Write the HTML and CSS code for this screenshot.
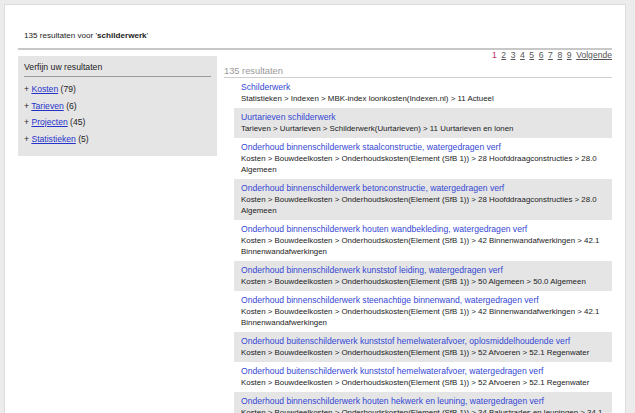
FILE: index.html
```html
<!DOCTYPE html>
<html lang="nl">
<head>
<meta charset="utf-8">
<title>Zoekresultaten</title>
<link rel="stylesheet" href="styles.css">
</head>
<body>
<div class="panel">
  <div class="header">135 resultaten voor '<b>schilderwerk</b>'</div>
  <div class="columns">
    <aside class="refine">
      <div class="refine-title">Verfijn uw resultaten</div>
      <ul class="facets">
        <li>+ <a href="#">Kosten</a> (79)</li>
        <li>+ <a href="#">Tarieven</a> (6)</li>
        <li>+ <a href="#">Projecten</a> (45)</li>
        <li>+ <a href="#">Statistieken</a> (5)</li>
      </ul>
    </aside>
    <main class="results">
      <div class="pager"><span class="current">1</span> <a href="#">2</a> <a href="#">3</a> <a href="#">4</a> <a href="#">5</a> <a href="#">6</a> <a href="#">7</a> <a href="#">8</a> <a href="#">9</a> <a href="#">Volgende</a></div>
      <div class="count">135 resultaten</div>
      <ul class="list">
        <li><a href="#">Schilderwerk</a><div class="path">Statistieken &gt; Indexen &gt; MBK-index loonkosten(Indexen.nl) &gt; 11 Actueel</div></li>
        <li class="alt"><a href="#">Uurtarieven schilderwerk</a><div class="path">Tarieven &gt; Uurtarieven &gt; Schilderwerk(Uurtarieven) &gt; 11 Uurtarieven en lonen</div></li>
        <li><a href="#">Onderhoud binnenschilderwerk staalconstructie, watergedragen verf</a><div class="path">Kosten &gt; Bouwdeelkosten &gt; Onderhoudskosten(Element (SfB 1)) &gt; 28 Hoofddraagconstructies &gt; 28.0 Algemeen</div></li>
        <li class="alt"><a href="#">Onderhoud binnenschilderwerk betonconstructie, watergedragen verf</a><div class="path">Kosten &gt; Bouwdeelkosten &gt; Onderhoudskosten(Element (SfB 1)) &gt; 28 Hoofddraagconstructies &gt; 28.0 Algemeen</div></li>
        <li><a href="#">Onderhoud binnenschilderwerk houten wandbekleding, watergedragen verf</a><div class="path">Kosten &gt; Bouwdeelkosten &gt; Onderhoudskosten(Element (SfB 1)) &gt; 42 Binnenwandafwerkingen &gt; 42.1 Binnenwandafwerkingen</div></li>
        <li class="alt"><a href="#">Onderhoud binnenschilderwerk kunststof leiding, watergedragen verf</a><div class="path">Kosten &gt; Bouwdeelkosten &gt; Onderhoudskosten(Element (SfB 1)) &gt; 50 Algemeen &gt; 50.0 Algemeen</div></li>
        <li><a href="#">Onderhoud binnenschilderwerk steenachtige binnenwand, watergedragen verf</a><div class="path">Kosten &gt; Bouwdeelkosten &gt; Onderhoudskosten(Element (SfB 1)) &gt; 42 Binnenwandafwerkingen &gt; 42.1 Binnenwandafwerkingen</div></li>
        <li class="alt"><a href="#">Onderhoud buitenschilderwerk kunststof hemelwaterafvoer, oplosmiddelhoudende verf</a><div class="path">Kosten &gt; Bouwdeelkosten &gt; Onderhoudskosten(Element (SfB 1)) &gt; 52 Afvoeren &gt; 52.1 Regenwater</div></li>
        <li><a href="#">Onderhoud buitenschilderwerk kunststof hemelwaterafvoer, watergedragen verf</a><div class="path">Kosten &gt; Bouwdeelkosten &gt; Onderhoudskosten(Element (SfB 1)) &gt; 52 Afvoeren &gt; 52.1 Regenwater</div></li>
        <li class="alt"><a href="#">Onderhoud binnenschilderwerk houten hekwerk en leuning, watergedragen verf</a><div class="path">Kosten &gt; Bouwdeelkosten &gt; Onderhoudskosten(Element (SfB 1)) &gt; 34 Balustrades en leuningen &gt; 34.1 Balustrades</div></li>
      </ul>
    </main>
  </div>
</div>
</body>
</html>
```

FILE: styles.css
```css
html, body {
  margin: 0;
  padding: 0;
  height: 100%;
  overflow: hidden;
}
body {
  background: #ececec;
  font-family: "Liberation Sans", Arial, sans-serif;
  color: #222;
}
.panel {
  margin: 4px 9px 0 4px;
  background: #fff;
  border: 1px solid #dcdcdc;
  border-bottom: none;
  padding: 0 13px;
  min-height: 420px;
}
.header {
  font-size: 8.1px;
  line-height: 11px;
  padding: 25px 0 7px 6px;
  border-bottom: 2px solid #c8c8c8;
  color: #222;
}
.header b { font-weight: bold; }
.columns {
  display: flex;
  gap: 7px;
  margin-top: 0;
}
.refine {
  width: 187px;
  flex: none;
  align-self: flex-start;
  margin-top: 6px;
  background: #e5e5e5;
  padding: 4px 6px 9px;
}
.refine-title {
  font-size: 8.7px;
  line-height: 12px;
  padding: 1px 0 3px;
  border-bottom: 1px solid #9a9a9a;
}
.facets {
  list-style: none;
  margin: 0;
  padding: 4px 0 0;
  font-size: 8.6px;
  line-height: 16.5px;
}
.facets a {
  color: #2633c9;
  text-decoration: underline;
}
.results {
  flex: 1;
  min-width: 0;
}
.pager {
  text-align: right;
  font-size: 8.6px;
  line-height: 11px;
  color: #666;
}
.pager .current { color: #c2306a; }
.pager a {
  color: #555;
  text-decoration: underline;
  margin-left: 2.2px;
}
.count {
  font-size: 9.3px;
  line-height: 12px;
  color: #999;
  padding-top: 4px;
  padding-bottom: 0;
  border-bottom: 1px solid #cfcfcf;
}
.list {
  list-style: none;
  margin: 0 0 0 10px;
  padding: 0;
}
.list li {
  padding: 4px 7px;
  line-height: 11px;
}
.list li.alt { background: #e5e5e5; }
.list a {
  display: block;
  font-size: 8.6px;
  color: #3447d3;
  text-decoration: none;
}
.path {
  font-size: 7.9px;
  color: #222;
}
```
